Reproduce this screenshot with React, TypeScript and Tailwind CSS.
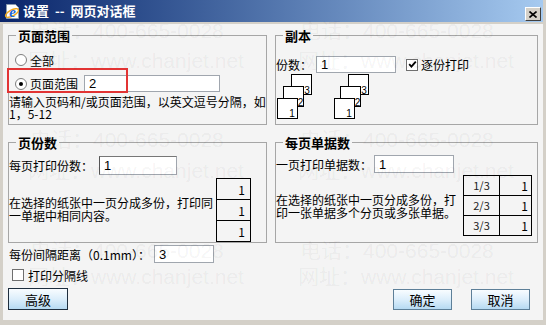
import type { ReactNode } from 'react';

// Fonts
const cjk = "font-['Noto_Sans_CJK_SC',sans-serif]";
const latin = "font-['Liberation_Sans','Noto_Sans_CJK_SC',sans-serif]";

function Radio({ checked = false }: { checked?: boolean }) {
  return (
    <span className="flex h-[12px] w-[12px] shrink-0 items-center justify-center rounded-full border border-[#7f7f7f] bg-white">
      {checked && <span className="h-[4px] w-[4px] rounded-full bg-black" />}
    </span>
  );
}

function Check({ checked = false, className = '' }: { checked?: boolean; className?: string }) {
  return (
    <span className={`flex h-[12px] w-[12px] shrink-0 items-center justify-center border border-[#6f6f6f] bg-white ${className}`}>
      {checked && (
        <svg width="9" height="9" viewBox="0 0 9 9">
          <path d="M1.2 4.2 L3.4 6.6 L7.8 1.6" fill="none" stroke="black" strokeWidth="1.8" />
        </svg>
      )}
    </span>
  );
}

function TextBox({ value, className = '' }: { value: string; className?: string }) {
  return (
    <div className={`flex items-center border border-[#a0a6ae] bg-white pl-[4px] text-[13px] ${latin} ${className}`}>
      {value}
    </div>
  );
}

function Btn({ children, className = '' }: { children: ReactNode; className?: string }) {
  return (
    <div
      className={`flex items-center justify-center bg-linear-to-b from-[#f8fcff] via-[#dceefb] to-[#b6daf2] text-[13px] leading-[13px] ${className}`}
    >
      {children}
    </div>
  );
}

// one stack of three pages (back 3, middle 2, front 1)
function Stack({ ox }: { ox: number }) {
  return (
    <g transform={`translate(${ox},0)`} fontFamily="Liberation Sans, sans-serif" fontSize="10" fill="black">
      <rect x="14.5" y="0.5" width="20" height="20" fill="white" stroke="black" />
      <text x="30" y="20" textAnchor="middle">3</text>
      <rect x="6.5" y="12.5" width="20" height="20" fill="white" stroke="black" />
      <text x="23.5" y="32" textAnchor="middle">2</text>
      <rect x="0.5" y="24.5" width="20" height="20" fill="white" stroke="black" />
      <text x="15" y="43" textAnchor="middle">1</text>
    </g>
  );
}

function Legend({ children }: { children: ReactNode }) {
  return <legend className="ml-[7px] px-[2px] text-[13px] font-bold leading-[13px]">{children}</legend>;
}

const watermarks = [
  { x: 30, y: 20, t: '电话：400-665-0028' },
  { x: 28, y: 50, t: '网址：www.chanjet.net' },
  { x: 300, y: 20, t: '电话：400-665-0028' },
  { x: 298, y: 50, t: '网址：www.chanjet.net' },
  { x: 30, y: 129, t: '电话：400-665-0028' },
  { x: 28, y: 160, t: '网址：www.chanjet.net' },
  { x: 300, y: 129, t: '电话：400-665-0028' },
  { x: 298, y: 160, t: '网址：www.chanjet.net' },
  { x: 30, y: 240, t: '电话：400-665-0028' },
  { x: 28, y: 266, t: '网址：www.chanjet.net' },
  { x: 300, y: 240, t: '电话：400-665-0028' },
  { x: 298, y: 266, t: '网址：www.chanjet.net' },
];

export default function App() {
  return (
    <div className={`relative flex h-[325px] w-[546px] flex-col overflow-hidden bg-[#d4d0c8] ${cjk} text-[12px] leading-[13px] text-black`}>
      {/* Title bar */}
      <div className="mr-[3px] flex h-[22px] shrink-0 items-start bg-linear-to-r from-[#0a246a] to-[#a6caf0]">
        <svg className="ml-[4px] mt-[3px]" width="17" height="17" viewBox="0 0 17 17">
          <path d="M2.5 1.5h9l3 3v11h-12z" fill="white" stroke="#8a9ab0" />
          <ellipse cx="8" cy="10" rx="7.2" ry="3" fill="none" stroke="#f2a81c" strokeWidth="1.3" transform="rotate(-28 8 10)" />
          <text x="8.5" y="14" textAnchor="middle" fontSize="15" fontWeight="bold" fontStyle="italic" fill="#1c64d4" fontFamily="Liberation Serif, serif">
            e
          </text>
        </svg>
        <span className="ml-[2px] mt-[4px] whitespace-pre text-[13px] font-bold leading-[14px] text-white">设置  --  网页对话框</span>
        <div className="ml-auto mr-[2px] mt-[7px] flex h-[14px] w-[16px] items-center justify-center border border-b-[#404040] border-l-white border-r-[#404040] border-t-white bg-[#d4d0c8]">
          <svg width="8" height="7" viewBox="0 0 8 7">
            <path d="M0.5 0.5 L7.5 6.5 M7.5 0.5 L0.5 6.5" stroke="black" strokeWidth="1.6" />
          </svg>
        </div>
      </div>

      {/* Body */}
      <div className="mx-[3px] mb-[5px] mt-[2px] flex flex-1 flex-col bg-[#f4f4f4] px-[5px] pt-[5px]">
        {/* Row 1 */}
        <div className="flex gap-[8px]">
          <fieldset className="h-[96px] w-[259px] border border-[#a6a6a6]">
            <Legend>页面范围</Legend>
            <div className="ml-[6px] mt-[11px] flex h-[14px] items-center">
              <Radio />
              <span className="ml-[3px]">全部</span>
            </div>
            <div className="ml-[6px] mt-[8px] flex h-[17px] items-center">
              <Radio checked />
              <span className="ml-[3px]">页面范围</span>
              <TextBox value="2" className="ml-[6px] h-[17px] w-[136px]" />
            </div>
            <div className="mt-[4px] whitespace-nowrap leading-[12px]">
              请输入页码和/或页面范围，以英文逗号分隔，如
              <br />
              1，5-12
            </div>
          </fieldset>

          <fieldset className="h-[96px] flex-1 border border-[#a6a6a6]">
            <Legend>副本</Legend>
            <div className="mt-[14px] flex h-[17px] items-center">
              <span>份数：</span>
              <TextBox value="1" className="ml-[4px] h-[17px] w-[80px]" />
              <Check checked className="ml-[10px]" />
              <span className="ml-[3px]">逐份打印</span>
            </div>
            <svg className="ml-[1px] mt-[1px]" width="93" height="46" viewBox="0 0 93 46">
              <Stack ox={0} />
              <Stack ox={57} />
            </svg>
          </fieldset>
        </div>

        {/* Row 2 */}
        <div className="mt-[11px] flex gap-[8px]">
          <fieldset className="h-[107px] w-[259px] border border-[#a6a6a6]">
            <Legend>页份数</Legend>
            <div className="mt-[7px] flex h-[19px] items-center">
              <span>每页打印份数：</span>
              <TextBox value="1" className="ml-[6px] h-[19px] w-[78px] border-l-[#555] border-t-[#777]" />
            </div>
            <div className="mt-[3px] flex">
              <div className="mt-[18px] w-[207px] whitespace-nowrap leading-[13px]">
                在选择的纸张中一页分成多份，打印同
                <br />
                一单据中相同内容。
              </div>
              <div className="w-[35px] border-l border-r border-t border-black">
                {[0, 1, 2].map((i) => (
                  <div key={i} className="flex h-[21px] items-center justify-end border-b border-black pr-[5px]">
                    1
                  </div>
                ))}
              </div>
            </div>
          </fieldset>

          <fieldset className="h-[107px] flex-1 border border-[#a6a6a6]">
            <Legend>每页单据数</Legend>
            <div className="mt-[6px] flex h-[18px] items-center">
              <span>一页打印单据数：</span>
              <TextBox value="1" className="ml-[2px] h-[18px] w-[80px]" />
            </div>
            <div className="mt-[2px] flex">
              <div className="mt-[18px] w-[187px] whitespace-nowrap leading-[13px]">
                在选择的纸张中一页分成多份，打
                <br />
                印一张单据多个分页或多张单据。
              </div>
              <div className="w-[69px] border-l border-r border-t border-black">
                {['1/3', '2/3', '3/3'].map((f) => (
                  <div key={f} className="flex h-[20px] items-center border-b border-black">
                    <span className="flex h-full w-[36px] items-center justify-center border-r border-black text-[11px] text-[#222]">
                      {f}
                    </span>
                    <span className="flex-1 pr-[3px] text-right">1</span>
                  </div>
                ))}
              </div>
            </div>
          </fieldset>
        </div>

        {/* Spacing */}
        <div className="mt-[2px] flex h-[18px] items-center">
          <span className="ml-[1px]">每份间隔距离（0.1mm）：</span>
          <TextBox value="3" className="ml-[4px] h-[18px] w-[60px]" />
        </div>
        <div className="mt-[5px] flex h-[14px] items-center">
          <Check className="ml-[4px]" />
          <span className="ml-[4px]">打印分隔线</span>
        </div>

        {/* Buttons */}
        <div className="mt-[6px] flex items-start">
          <Btn className="h-[22px] w-[60px] border border-[#1e2e3e]">高级</Btn>
          <Btn className="ml-auto mt-[1px] h-[21px] w-[59px] border border-[#5d7f98]">确定</Btn>
          <Btn className="ml-[19px] mr-[8px] mt-[1px] h-[21px] w-[59px] border border-[#5d7f98]">取消</Btn>
        </div>
      </div>

      {/* Red highlight */}
      <div className="pointer-events-none absolute left-[7px] top-[68px] h-[25px] w-[121px] border-2 border-[#e23434]" />

      {/* Watermark */}
      {watermarks.map((w, i) => (
        <span
          key={i}
          className={`pointer-events-none absolute whitespace-nowrap text-[21px] leading-[21px] text-black/[0.055] ${latin}`}
          style={{ left: w.x, top: w.y }}
        >
          {w.t}
        </span>
      ))}
    </div>
  );
}
